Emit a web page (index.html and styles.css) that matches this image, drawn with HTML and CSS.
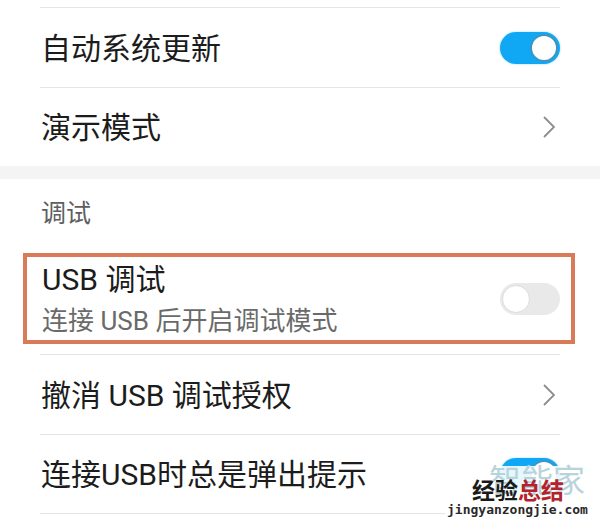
FILE: index.html
```html
<!DOCTYPE html>
<html lang="zh-CN">
<head>
<meta charset="utf-8">
<link rel="stylesheet" href="styles.css">
</head>
<body>
<div class="page">
  <div class="top-line"></div>
  <div class="item first">
    <span class="label">自动系统更新</span>
    <span class="toggle on"><span class="knob"></span></span>
  </div>
  <div class="item last">
    <span class="label">演示模式</span>
    <svg class="chev" width="12" height="22" viewBox="0 0 12 22"><polyline points="1,1 11,11 1,21" fill="none" stroke="#8c8c8c" stroke-width="1.8"/></svg>
  </div>
  <div class="band"></div>
  <div class="header">调试</div>
  <div class="box">
    <div class="box-text">
      <div class="title">USB 调试</div>
      <div class="sub">连接 USB 后开启调试模式</div>
    </div>
    <span class="toggle off"><span class="knob"></span></span>
  </div>
  <div class="item after-box">
    <span class="label">撤消 USB 调试授权</span>
    <svg class="chev" width="12" height="22" viewBox="0 0 12 22"><polyline points="1,1 11,11 1,21" fill="none" stroke="#8c8c8c" stroke-width="1.8"/></svg>
  </div>
  <div class="item final">
    <span class="label">连接USB时总是弹出提示</span>
    <span class="toggle on"><span class="knob"></span></span>
  </div>

  <div class="wm">
    <span class="wm-bg-text">智能家</span>
    <span class="wm-main"><span class="wm-black">经验</span><span class="wm-red">总结</span></span>
    <span class="wm-url">jingyanzongjie.com</span>
  </div>
</div>
</body>
</html>
```
FILE: styles.css
```css
* { box-sizing: border-box; }
html, body {
  margin: 0;
  padding: 0;
  background: #ffffff;
}
body {
  font-family: Roboto, "Noto Sans CJK SC", sans-serif;
  color: #1c1c1c;
  width: 600px;
  height: 527px;
  overflow: hidden;
}
.page {
  position: relative;
  width: 600px;
  height: 527px;
  padding-top: 7px;
}
.top-line {
  margin: 0 40px;
  border-top: 1px solid #e4e4e4;
}
.item {
  margin: 0 40px;
  display: flex;
  align-items: center;
  justify-content: space-between;
  border-bottom: 1px solid #e4e4e4;
}
.item.first { height: 80px; }
.item.last { height: 78px; border-bottom: none; }
.item.after-box {
  margin-top: 10px;
  border-top: 1px solid #e4e4e4;
  height: 81px;
}
.item.final { height: 79px; }
.label {
  font-size: 30px;
  line-height: 40px;
  padding-left: 1px;
  padding-top: 2px;
}
.chev { margin-right: 5px; }
.band {
  height: 13px;
  background: #f4f4f4;
}
.header {
  height: 74px;
  padding: 18px 0 0 41px;
  font-size: 25px;
  line-height: 34px;
  color: #5e5e5e;
}
.box {
  margin: 0 25px 0 23px;
  border: 4px solid #d97a58;
  height: 91px;
  display: flex;
  align-items: center;
  justify-content: space-between;
  padding: 0 11px 0 15px;
}
.box-text {
  display: flex;
  flex-direction: column;
  gap: 6px;
  padding-top: 2px;
}
.title {
  font-size: 30px;
  line-height: 36px;
}
.sub {
  font-size: 26px;
  line-height: 34px;
  color: #6a6a6a;
}
.toggle {
  position: relative;
  width: 60px;
  height: 32px;
  border-radius: 16px;
  flex: none;
}
.toggle.on {
  background: #10a8f4;
  box-shadow: 0 0 2px rgba(16,168,244,0.5);
}
.toggle.off {
  background: #e9e9e9;
}
.toggle .knob {
  position: absolute;
  top: 2px;
  width: 28px;
  height: 28px;
  border-radius: 50%;
  background: #ffffff;
}
.toggle.on .knob {
  right: 2px;
  border: 2px solid #3d95c4;
}
.toggle.off .knob {
  left: 2px;
  border: 1px solid #dcdcdc;
}
.wm {
  position: absolute;
  left: 445px;
  top: 466px;
  width: 147px;
  height: 54px;
  background: rgba(255,255,255,0.9);
}
.wm-bg-text {
  position: absolute;
  left: 44px;
  top: -4px;
  font-family: "Noto Sans CJK SC", sans-serif;
  font-size: 32px;
  line-height: 32px;
  color: #b7d4db;
  white-space: nowrap;
}
.wm-main {
  position: absolute;
  left: 27px;
  top: 11px;
  font-family: "Noto Sans CJK SC", sans-serif;
  font-size: 23px;
  line-height: 24px;
  font-weight: bold;
  white-space: nowrap;
}
.wm-black { color: #1a1a1a; }
.wm-red { color: #b4232b; }
.wm-url {
  position: absolute;
  left: 2px;
  top: 36px;
  font-family: "DejaVu Sans Mono", monospace;
  font-size: 13px;
  line-height: 15px;
  font-weight: bold;
  color: #2a2a2a;
  white-space: nowrap;
}
```
